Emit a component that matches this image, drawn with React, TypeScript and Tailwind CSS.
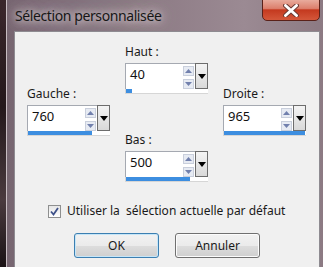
import React from "react";

type SpinProps = { label: string; value: string; bar: number };

function SpinField({ label, value, bar }: SpinProps) {
  return (
    <div className="flex flex-col">
      <div className="h-[16px] leading-[16px] text-[12px] text-[#1a1a1a] mb-[3px]">{label}</div>
      <div className="w-[83px] h-[31px] flex flex-col border-b border-[#d6d6d6]">
        <div className="h-[27px] flex">
          <div className="flex-1 flex bg-white border-t border-l border-[#a5a9b1]">
            <div className="flex-1 pl-[4px] pt-[2px] text-[13px] leading-[17px] text-[#111]">{value}</div>
            <div className="w-[11px] flex flex-col gap-[3px] pt-[2px] mr-[1px]">
              <div className="h-[10px] bg-[#e7ebf3] border border-[#c9cfdc] flex items-center justify-center">
                <svg width="7" height="4" viewBox="0 0 7 4">
                  <path d="M0 4 L3.5 0 L7 4 Z" fill="#7180ad" />
                </svg>
              </div>
              <div className="h-[10px] bg-[#e7ebf3] border border-[#c9cfdc] flex items-center justify-center">
                <svg width="7" height="4" viewBox="0 0 7 4">
                  <path d="M0 0 L3.5 4 L7 0 Z" fill="#7180ad" />
                </svg>
              </div>
            </div>
          </div>
          <div className="w-[13px] border border-[#6d6d6d] bg-[linear-gradient(to_bottom,#f4f4f4,#d9d9d9)] flex items-center justify-center pt-[1px]">
            <svg width="8" height="5" viewBox="0 0 8 5">
              <path d="M0 0 L8 0 L4 5 Z" fill="#000" />
            </svg>
          </div>
        </div>
        <div className="h-[4px] bg-white border-l border-[#d6d6d6]">
          <div className="h-full bg-[#3d8ee0]" style={{ width: bar }} />
        </div>
      </div>
    </div>
  );
}

export default function App() {
  return (
    <div className="w-[323px] h-[267px] overflow-hidden flex bg-[#2a1c20] font-['Noto_Sans','Open_Sans',sans-serif]">
      <div className="w-[6px] bg-[linear-gradient(to_bottom,#3a262b,#24181b_40%,#4a3a3e_75%,#1a1214)]" />
      <div className="relative flex-1 flex flex-col border-l border-[#c7bcc1] bg-[linear-gradient(to_right,#766570,#8d7b85_45%,#9b8a93_75%,#8c7a83)]">
        <div className="h-[31px] flex items-center pl-[8px]">
          <span className="text-[14px] tracking-[-0.4px] text-[#161616] [text-shadow:0_0_6px_#d9cfd4,0_0_12px_#d2c6cb,0_0_18px_#cbbec4]">
            Sélection personnalisée
          </span>
        </div>
        <div className="absolute top-[-2px] right-[3px] w-[58px] h-[23px] rounded-b-[5px] border border-[#5a2119] bg-[linear-gradient(to_bottom,#eab0a2,#dc7f6c_45%,#c4391f_52%,#d4573a)] flex items-center justify-center pt-[2px]">
          <svg width="16" height="13" viewBox="0 0 16 13">
            <path d="M2.5 1.5 L13.5 11.5 M13.5 1.5 L2.5 11.5" stroke="#6b3a34" strokeWidth="4.8" strokeLinecap="round" />
            <path d="M2.5 1.5 L13.5 11.5 M13.5 1.5 L2.5 11.5" stroke="#ffffff" strokeWidth="2.9" strokeLinecap="round" />
          </svg>
        </div>
        <div className="flex-1 ml-[7px] mr-[3px] bg-[#f0f0f0] border border-b-0 border-[#8e8b91] flex flex-col">
          <div className="flex pl-[12px] pt-[12px]">
            <div className="mt-[42px]">
              <SpinField label="Gauche :" value="760" bar={64} />
            </div>
            <div className="ml-[15px] flex flex-col gap-[38px]">
              <SpinField label="Haut :" value="40" bar={6} />
              <SpinField label="Bas :" value="500" bar={64} />
            </div>
            <div className="ml-[15px] mt-[42px]">
              <SpinField label="Droite :" value="965" bar={81} />
            </div>
          </div>
          <div className="mt-[21px] pl-[33px] h-[16px] flex items-center gap-[6px]">
            <div className="w-[13px] h-[13px] border border-[#8e8f8f] bg-[linear-gradient(to_bottom,#e6e6e6,#ffffff)] flex items-center justify-center">
              <svg width="9" height="9" viewBox="0 0 9 9">
                <path d="M1 4.5 L3.5 7.5 L8 1" stroke="#3f528a" strokeWidth="1.8" fill="none" />
              </svg>
            </div>
            <span className="text-[12px] text-[#1a1a1a] whitespace-pre">Utiliser la  sélection actuelle par défaut</span>
          </div>
          <div className="mt-[14px] pl-[59px] flex gap-[16px]">
            <button className="w-[85px] h-[25px] rounded-[3px] border border-[#3c7fb1] bg-[linear-gradient(to_bottom,#f2f2f2,#ebebeb_50%,#dddddd_51%,#cfcfcf)] shadow-[inset_0_0_0_1px_#c6e6f8] text-[12px] text-[#1a1a1a]">
              OK
            </button>
            <button className="w-[85px] h-[25px] rounded-[3px] border border-[#707070] bg-[linear-gradient(to_bottom,#f2f2f2,#ebebeb_50%,#dddddd_51%,#cfcfcf)] shadow-[inset_0_0_0_1px_#fcfcfc] text-[12px] text-[#1a1a1a]">
              Annuler
            </button>
          </div>
        </div>
      </div>
    </div>
  );
}
